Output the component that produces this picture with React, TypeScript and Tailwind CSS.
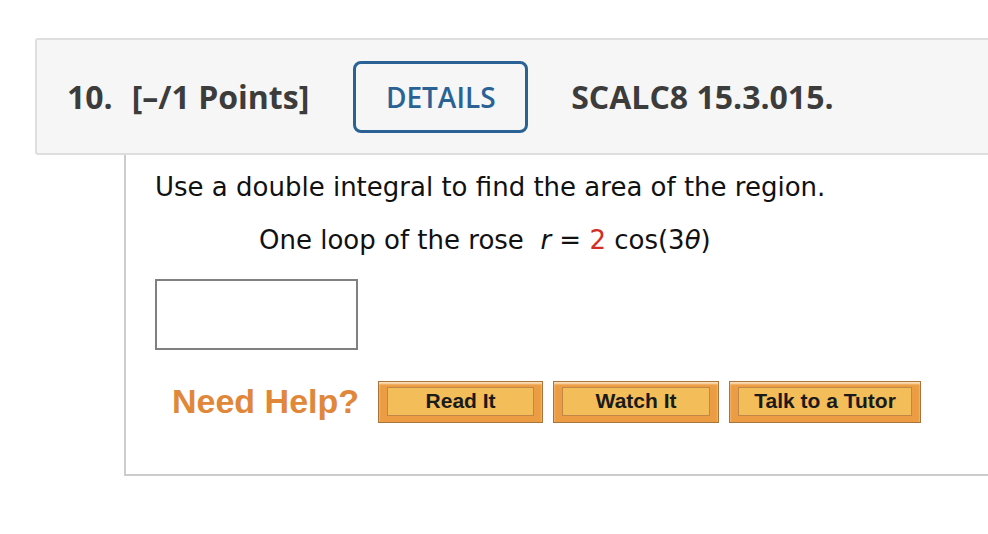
import React from 'react';

const HelpButton: React.FC<{ label: string; width: string }> = ({ label, width }) => (
  <button
    className={`${width} h-[42px] border border-[#a9743a] bg-[#ec9c42] px-[8px] pt-[5px] pb-[6px] shadow-[inset_0_2px_2px_#fbe2c0] flex`}
  >
    <span className="flex-1 flex items-center justify-center border border-[#c08748] bg-[#f3bd59] text-[21px] font-bold text-[#1a1a1a] font-['Liberation_Sans',Arial,sans-serif]">
      {label}
    </span>
  </button>
);

export default function App() {
  return (
    <div className="w-screen min-h-screen overflow-hidden bg-white">
      <div className="w-[1010px] pt-[38px] pl-[35px]">
        {/* question header */}
        <div className="h-[117px] border-2 border-[#dedede] rounded-[3px] bg-[#f6f6f6] flex items-center pl-[30px] font-['Open_Sans',sans-serif] text-[#3c3c3c]">
          <span className="text-[32px] font-bold">10.</span>
          <span className="text-[32px] font-bold ml-[19px]">[–/1 Points]</span>
          <div className="ml-[44px] w-[175px] h-[72px] border-[3px] border-[#2a6296] rounded-[8px] flex items-center justify-center text-[28px] font-semibold text-[#2a6296]">
            DETAILS
          </div>
          <span className="ml-[43px] text-[32px] font-bold">SCALC8 15.3.015.</span>
        </div>

        {/* question body */}
        <div className="ml-[89px] h-[321px] border-l-2 border-b-2 border-[#cccccc] pl-[29px] pt-[17px] font-['DejaVu_Sans',Verdana,sans-serif] text-[#111111]">
          <p className="text-[26px] leading-[30px]">Use a double integral to find the area of the region.</p>
          <p className="text-[26px] leading-[30px] mt-[23px] pl-[104px]">
            One loop of the rose&nbsp; <i>r</i> = <span className="text-[#d12e26]">2</span> cos(3<i>θ</i>)
          </p>

          <div className="mt-[24px] w-[203px] h-[71px] border-2 border-[#808080] bg-white" />

          <div className="mt-[26px] flex items-center">
            <span className="ml-[17px] mr-[19px] text-[34px] font-bold text-[#e0873a] font-['Liberation_Sans',Arial,sans-serif]">
              Need Help?
            </span>
            <div className="flex gap-[10px]">
              <HelpButton label="Read It" width="w-[165px]" />
              <HelpButton label="Watch It" width="w-[166px]" />
              <HelpButton label="Talk to a Tutor" width="w-[192px]" />
            </div>
          </div>
        </div>
      </div>
    </div>
  );
}
